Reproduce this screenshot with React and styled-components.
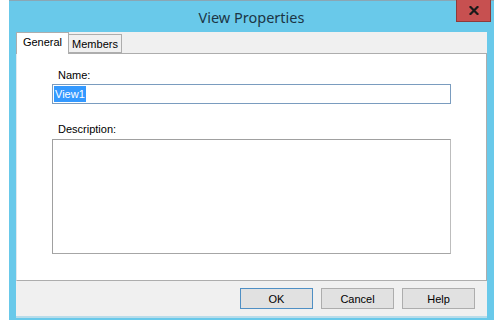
import React from "react";
import styled, { createGlobalStyle } from "styled-components";

const Global = createGlobalStyle`
  html, body { margin: 0; padding: 0; background: #ffffff; }
  body { font-family: "Liberation Sans", Arial, sans-serif; }
`;

const Window = styled.div`
  margin-left: 9px;
  width: 485px;
  height: 320px;
  box-sizing: border-box;
  background: #69c9ea;
  border-top: 1px solid #8aa6b4;
  display: flex;
  flex-direction: column;
  padding: 0 7px 2px 7px;
`;

const TitleBar = styled.div`
  position: relative;
  height: 31px;
  flex: none;
  display: flex;
  align-items: center;
  justify-content: center;
`;

const Title = styled.div`
  font-family: "Noto Sans", "Open Sans", sans-serif;
  font-size: 14.5px;
  color: #1c3645;
  padding-top: 1px;
  letter-spacing: 0px;
`;

const CloseButton = styled.div`
  position: absolute;
  right: -4px;
  top: -1px;
  width: 35px;
  height: 22px;
  box-sizing: border-box;
  background: #c75050;
  border: 1px solid #8e3a3a;
  border-top: none;
  display: flex;
  align-items: center;
  justify-content: center;
`;

const Client = styled.div`
  flex: 1;
  background: #f0f0f0;
  display: flex;
  flex-direction: column;
  border-bottom: 2px solid #b8dcea;
`;

const TabStrip = styled.div`
  display: flex;
  align-items: flex-end;
  height: 21px;
  position: relative;
  z-index: 1;
`;

const Tab = styled.div`
  width: 53px;
  box-sizing: border-box;
  height: ${(p) => (p.$active ? "22px" : "19px")};
  margin-bottom: ${(p) => (p.$active ? "-1px" : "0")};
  background: ${(p) => (p.$active ? "#ffffff" : "#f0f0f0")};
  border: 1px solid #adadad;
  border-bottom: ${(p) => (p.$active ? "none" : "1px solid #adadad")};
  font-size: 11px;
  color: #000;
  display: flex;
  align-items: center;
  justify-content: center;
  padding-bottom: ${(p) => (p.$active ? "3px" : "0")};
  & + & { border-left: none; }
`;

const Panel = styled.div`
  height: 228px;
  box-sizing: border-box;
  background: #ffffff;
  border: 1px solid #adadad;
  border-left-color: #dfe8ee;
  padding: 15px 35px 0 35px;
  display: flex;
  flex-direction: column;
`;

const Label = styled.div`
  font-size: 11px;
  line-height: 13px;
  color: #000;
  margin-left: 6px;
  margin-top: ${(p) => p.$top || 0}px;
  margin-bottom: ${(p) => p.$bottom || 2}px;
`;

const TextBox = styled.div`
  height: 20px;
  width: 399px;
  box-sizing: border-box;
  border: 1px solid #7a9cbf;
  background: #fff;
  display: flex;
  align-items: center;
  padding-left: 1px;
`;

const Selected = styled.span`
  background: #3399ff;
  color: #fff;
  font-size: 11px;
  line-height: 16px;
  padding: 0 1px;
`;

const TextArea = styled.div`
  height: 115px;
  width: 399px;
  box-sizing: border-box;
  border: 1px solid #a0a0a0;
  border-right-color: #bdbdbd;
  border-bottom-color: #a6a6a6;
  background: #fff;
`;

const Footer = styled.div`
  flex: 1;
  display: flex;
  justify-content: flex-end;
  align-items: flex-start;
  gap: 8px;
  padding: 7px 12px 0 0;
`;

const Button = styled.div`
  width: 73px;
  height: 21px;
  box-sizing: border-box;
  background: #e1e1e1;
  border: 1px solid ${(p) => (p.$default ? "#4f8fc4" : "#adadad")};
  font-size: 11px;
  color: #000;
  display: flex;
  align-items: center;
  justify-content: center;
`;

export default function App() {
  return (
    <>
      <Global />
      <Window>
        <TitleBar>
          <Title>View Properties</Title>
          <CloseButton>
            <svg width="10" height="9" viewBox="0 0 10 9">
              <path d="M1.5 1 L8.5 8 M8.5 1 L1.5 8" stroke="#1a1a1a" strokeWidth="2.2" strokeLinecap="square" />
            </svg>
          </CloseButton>
        </TitleBar>
        <Client>
          <TabStrip>
            <Tab $active>General</Tab>
            <Tab>Members</Tab>
          </TabStrip>
          <Panel>
            <Label>Name:</Label>
            <TextBox>
              <Selected>View1</Selected>
            </TextBox>
            <Label $top={19} $bottom={3}>Description:</Label>
            <TextArea />
          </Panel>
          <Footer>
            <Button $default>OK</Button>
            <Button>Cancel</Button>
            <Button>Help</Button>
          </Footer>
        </Client>
      </Window>
    </>
  );
}
